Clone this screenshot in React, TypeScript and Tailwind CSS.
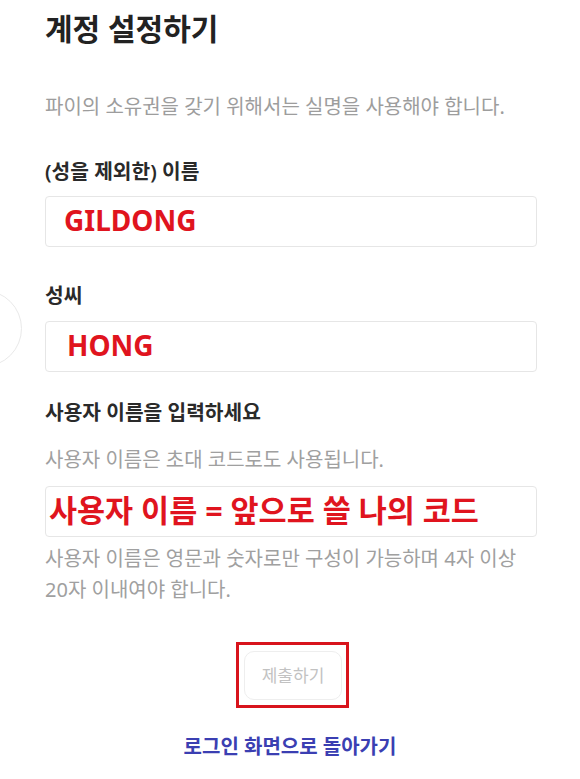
import React from "react";

const font = { fontFamily: '"Noto Sans", "Noto Sans CJK KR", sans-serif' } as const;

export default function App() {
  return (
    <div
      className="relative w-[580px] h-[779px] overflow-hidden bg-white text-[#222]"
      style={font}
    >
      <div className="absolute left-[-55px] top-[290px] w-[77px] h-[77px] rounded-full border border-[#e9e9e9]" />
      <div className="pl-[45px] pr-[43px] pt-[11px]">
        <h1 className="text-[30px] leading-[36px] font-semibold text-[#222]">계정 설정하기</h1>
        <p className="mt-[46px] text-[20px] leading-[28px] text-[#9d9d9d]">
          파이의 소유권을 갖기 위해서는 실명을 사용해야 합니다.
        </p>
        <div className="mt-[36px] text-[20.3px] leading-[28px] font-semibold text-[#2a2a2a]">
          (성을 제외한) 이름
        </div>
        <div className="mt-[11px] h-[51px] rounded-[4px] border border-[#e6e6e6] flex items-center pl-[18px] pb-[3px]">
          <span className="text-[28px] font-bold text-[#e0141e] leading-none">GILDONG</span>
        </div>
        <div className="mt-[34px] text-[20.3px] leading-[28px] font-semibold text-[#2a2a2a]">성씨</div>
        <div className="mt-[12px] h-[51px] rounded-[4px] border border-[#e6e6e6] flex items-center pl-[21px] pb-[3px]">
          <span className="text-[28px] font-bold text-[#e0141e] leading-none">HONG</span>
        </div>
        <div className="mt-[26px] text-[20.3px] leading-[28px] font-semibold text-[#2a2a2a]">
          사용자 이름을 입력하세요
        </div>
        <p className="mt-[20px] text-[20px] leading-[28px] text-[#a0a0a0]">
          사용자 이름은 초대 코드로도 사용됩니다.
        </p>
        <div className="mt-[12px] h-[51px] rounded-[4px] border border-[#e6e6e6] flex items-center pl-[3px] pb-[2px]">
          <span className="text-[30.5px] font-bold text-[#e0141e] leading-none whitespace-nowrap">
            사용자 이름 = 앞으로 쓸 나의 코드
          </span>
        </div>
        <p className="mt-[6px] text-[20px] leading-[31px] text-[#a0a0a0]">
          사용자 이름은 영문과 숫자로만 구성이 가능하며 4자 이상
          <br />
          20자 이내여야 합니다.
        </p>
      </div>
      <div className="mt-[37px] flex justify-center">
        <div className="border-[3px] border-[#d8141c] pt-[6px] pb-[5px] pl-[5px] pr-[4px] ml-[5px]">
          <button className="w-[98px] h-[49px] rounded-[10px] border border-[#eeeeee] bg-white text-[17px] text-[#c2c2c2]">
            제출하기
          </button>
        </div>
      </div>
      <div className="mt-[25px] text-center text-[20px] leading-[28px] font-semibold text-[#3b3fb2]">
        로그인 화면으로 돌아가기
      </div>
    </div>
  );
}
